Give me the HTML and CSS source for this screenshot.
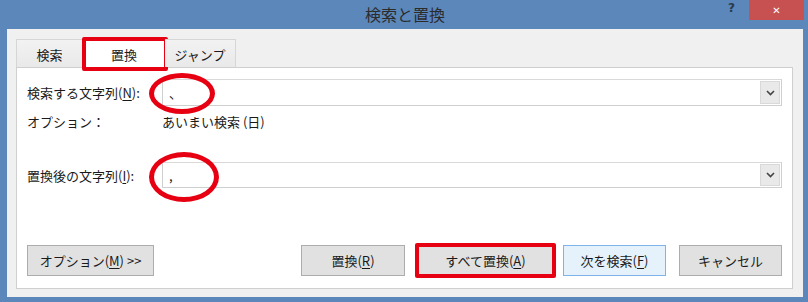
FILE: index.html
```html
<!DOCTYPE html>
<html lang="ja">
<head>
<meta charset="utf-8">
<title>検索と置換</title>
<link rel="stylesheet" href="styles.css">
</head>
<body>
<div class="window">
  <div class="titlebar">
    <div class="title">検索と置換</div>
    <div class="help">?</div>
    <div class="close">✕</div>
  </div>
  <div class="dialog">
    <div class="tabs">
      <div class="tab">検索</div>
      <div class="tab active">置換<span class="mark-rect tab-mark"></span></div>
      <div class="tab">ジャンプ</div>
    </div>
    <div class="panel">
      <div class="row row-find">
        <div class="label">検索する文字列(<u>N</u>):</div>
        <div class="combo">
          <div class="combo-text">、</div>
          <div class="combo-btn"><svg width="9" height="6" viewBox="0 0 9 6"><polyline points="1,1 4.5,4.5 8,1" fill="none" stroke="#444" stroke-width="1.6"/></svg></div>
          <span class="mark-ellipse ell1"></span>
        </div>
      </div>
      <div class="row row-opt">
        <div class="label">オプション：</div>
        <div class="opt-val">あいまい検索 (日)</div>
      </div>
      <div class="row row-repl">
        <div class="label">置換後の文字列(<u>I</u>):</div>
        <div class="combo">
          <div class="combo-text">,</div>
          <div class="combo-btn"><svg width="9" height="6" viewBox="0 0 9 6"><polyline points="1,1 4.5,4.5 8,1" fill="none" stroke="#444" stroke-width="1.6"/></svg></div>
          <span class="mark-ellipse ell2"></span>
        </div>
      </div>
      <div class="buttons">
        <div class="btn btn-opt">オプション(<u>M</u>) &gt;&gt;</div>
        <div class="btn-group">
          <div class="btn w104">置換(<u>R</u>)</div>
          <div class="btn w135">すべて置換(<u>A</u>)<span class="mark-rect btn-mark"></span></div>
          <div class="btn w103 default">次を検索(<u>F</u>)</div>
          <div class="btn w103">キャンセル</div>
        </div>
      </div>
    </div>
  </div>
</div>
</body>
</html>
```

FILE: styles.css
```css
* { box-sizing: border-box; }
html, body { margin: 0; padding: 0; }
body {
  width: 808px;
  height: 302px;
  background: #5b87bb;
  font-family: "Noto Sans CJK JP", "Noto Sans", sans-serif;
  font-size: 13px;
  color: #1a1a1a;
  overflow: hidden;
}
u { text-decoration: underline; text-underline-offset: 2px; }

.window { width: 808px; height: 302px; display: flex; flex-direction: column; }

.titlebar {
  height: 29px;
  position: relative;
  display: flex;
  align-items: center;
  justify-content: center;
}
.title {
  font-size: 16px;
  color: #2b2b2b;
  margin-left: 2px;
  margin-top: -1px;
}
.help {
  position: absolute;
  left: 728px;
  top: 1px;
  font-family: "DejaVu Sans", sans-serif;
  font-size: 12px;
  font-weight: bold;
  color: #2a3a4a;
}
.close {
  position: absolute;
  left: 749px;
  top: 0;
  width: 55px;
  height: 20px;
  background: #c75050;
  color: #fff;
  font-family: "DejaVu Sans", sans-serif;
  font-size: 10px;
  display: flex;
  align-items: center;
  justify-content: center;
}

.dialog {
  margin: 0 5px 0 7px;
  height: 268px;
  background: #f0f0f0;
  padding: 10px 10px 8px 9px;
  display: flex;
  flex-direction: column;
}

.tabs { display: flex; height: 28px; }
.tab {
  position: relative;
  height: 28px;
  border: 1px solid #d6d6d6;
  border-bottom: none;
  background: linear-gradient(#f2f2f2, #e9e9e9);
  display: flex;
  align-items: center;
  justify-content: center;
  padding-top: 1px;
}
.tab:nth-child(1) { width: 67px; }
.tab:nth-child(2) { width: 82px; background: #fff; border-color: #d0d0d0; }
.tab:nth-child(3) { width: 71px; border-left: none; }

.mark-rect {
  position: absolute;
  border: 4px solid #e60012;
  border-radius: 2px;
  pointer-events: none;
}
.tab-mark { left: -2px; top: -3px; right: -4px; bottom: -4px; }
.btn-mark { left: -4px; top: -3px; right: -4px; bottom: -3px; }

.panel {
  flex: 1;
  background: #fff;
  border: 1px solid #cfcfcf;
  padding: 11px 10px 12px 10px;
  display: flex;
  flex-direction: column;
}

.row { display: flex; align-items: center; }
.label { width: 135px; flex: none; white-space: nowrap; }
.row-find { height: 27px; }
.row-opt { height: 18px; margin-top: 6px; }
.row-repl { height: 26px; margin-top: 32px; }

.combo {
  position: relative;
  flex: 1;
  height: 100%;
  border: 1px solid #cfcfcf;
  border-top-color: #d9d9d9;
  display: flex;
  align-items: stretch;
}
.combo-text { flex: 1; padding-left: 6px; display: flex; align-items: center; }
.combo-btn {
  width: 20px;
  margin: 1px;
  background: #e9e9e9;
  border: 1px solid #d9d9d9;
  display: flex;
  align-items: center;
  justify-content: center;
}

.mark-ellipse {
  position: absolute;
  border: 5px solid #e60012;
  border-radius: 50%;
  pointer-events: none;
}
.ell1 { left: -14px; top: -7px; width: 66px; height: 41px; }
.ell2 { left: -14px; top: -11px; width: 70px; height: 50px; }

.buttons {
  margin-top: auto;
  display: flex;
  justify-content: space-between;
  align-items: center;
}
.btn-group { display: flex; gap: 13px; }
.btn {
  position: relative;
  height: 31px;
  background: #e1e1e1;
  border: 1px solid #adadad;
  display: flex;
  align-items: center;
  justify-content: center;
  white-space: nowrap;
}
.btn-opt { width: 127px; }
.w104 { width: 104px; }
.w135 { width: 135px; margin-right: -3px; }
.w103 { width: 103px; }
.btn.default { background: #e5f1fb; border-color: #7eb4ea; }
```
